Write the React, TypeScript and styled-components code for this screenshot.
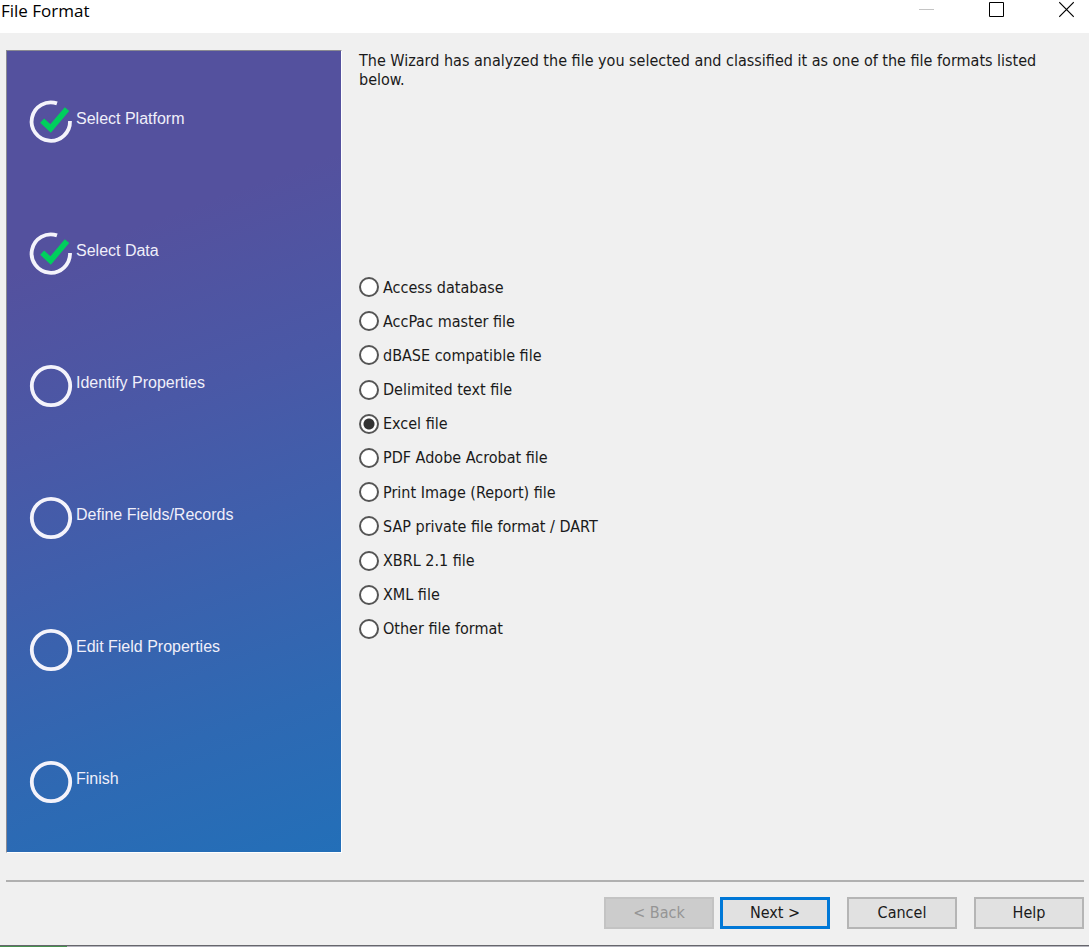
import React, { useState } from "react";
import styled, { createGlobalStyle } from "styled-components";

const GlobalStyle = createGlobalStyle`
  *, *::before, *::after { box-sizing: border-box; }
  body {
    margin: 0;
    background: #f0f0f0;
    color: #1a1a1a;
    font-family: Tahoma, "DejaVu Sans Condensed", "Open Sans", sans-serif;
    font-size: 16px;
  }
`;

const Window = styled.div`
  display: flex;
  flex-direction: column;
  min-height: 100vh;
`;

const TitleBar = styled.header`
  display: flex;
  justify-content: space-between;
  height: 33px;
  padding-left: 1px;
  background: #fff;
`;

const Title = styled.h1`
  margin: 0;
  color: #000;
  font-family: "Open Sans", "Noto Sans", sans-serif;
  font-size: 17px;
  font-weight: 400;
  line-height: 22px;
`;

const WindowControls = styled.div`
  display: flex;
  gap: 24px;
`;

const WindowButton = styled.button`
  display: flex;
  justify-content: center;
  width: 46px;
  height: 24px;
  padding: 1px 0 0 1px;
  border: 0;
  background: none;
  color: #000;

  &:disabled { color: #c4c4c4; }
`;

const Main = styled.main`
  display: flex;
  flex: 1;
  gap: 17px;
  padding: 17px 6px 27px;
`;

const Sidebar = styled.nav`
  flex: 0 0 336px;
  border: 1px solid;
  border-color: #8a8a92 #fff #fff #8a8a92;
  background: linear-gradient(160deg, #54519e 0%, #54519e 24%, #4a58a6 44%, #3f5fac 60%, #2e69b3 82%, #236fb8 100%);
`;

const Steps = styled.ol`
  margin: 0;
  padding: 47px 0 0 21px;
  list-style: none;
`;

const Step = styled.li`
  display: flex;
  gap: 2px;
  height: 132px;
  color: #f0effa;
  font-family: "Liberation Sans", Arial, sans-serif;
  font-size: 16px;
  line-height: 20px;

  &:last-child { height: 48px; }
`;

const StepLabel = styled.span`
  padding-top: 11px;
`;

const Content = styled.section`
  flex: 1;
  min-width: 0;
`;

const Intro = styled.p`
  max-width: 700px;
  height: 220px;
  margin: 0;
  padding-top: 1px;
  line-height: 19px;
`;

const Formats = styled.div`
  display: flex;
  flex-direction: column;
  justify-content: space-between;
  min-height: 376px;
`;

const Option = styled.label`
  display: flex;
  align-items: center;
  align-self: flex-start;
  gap: 4px;
  height: 34px;
`;

const Radio = styled.input`
  appearance: none;
  width: 20px;
  height: 20px;
  margin: 0;
  border: 2px solid #555;
  border-radius: 50%;
  background: #fff;

  &:checked {
    background: radial-gradient(circle, #333 5px, #fff 6px);
  }
`;

const Footer = styled.footer`
  display: flex;
  justify-content: flex-end;
  gap: 17px;
  margin: 0 5px 0 6px;
  padding: 15px 0 16px;
  border-top: 2px solid #b0b0b0;
`;

const StepButtons = styled.div`
  display: flex;
  gap: 6px;
`;

const Button = styled.button<{ $primary?: boolean }>`
  width: 110px;
  height: 32px;
  padding: 0;
  border: ${(p) => (p.$primary ? "3px solid #0078d7" : "2px solid #b5b5b5")};
  background: #e1e1e1;
  color: #1a1a1a;
  font: inherit;
  line-height: 20px;

  &:disabled {
    border-color: #c3c3c3;
    background: #ccc;
    color: #959595;
  }
`;

const TaskStrip = styled.div`
  height: 2px;
  border-top: 1px solid #66666c;
  background: linear-gradient(to right, #47914f 67px, #b4b4bc 67px);
`;

const steps = [
  { label: "Select Platform", done: true },
  { label: "Select Data", done: true },
  { label: "Identify Properties", done: false },
  { label: "Define Fields/Records", done: false },
  { label: "Edit Field Properties", done: false },
  { label: "Finish", done: false },
];

const formats = [
  "Access database",
  "AccPac master file",
  "dBASE compatible file",
  "Delimited text file",
  "Excel file",
  "PDF Adobe Acrobat file",
  "Print Image (Report) file",
  "SAP private file format / DART",
  "XBRL 2.1 file",
  "XML file",
  "Other file format",
];

function StepIcon({ done }: { done: boolean }) {
  return (
    <svg width="46" height="48" viewBox="0 0 46 48" fill="none" aria-hidden="true">
      {done ? (
        <>
          <path d="M29 5.4A19.2 19.2 0 1 0 42 23" stroke="#f4f3fb" strokeWidth="3.8" />
          <path d="M14.2 22.7L22.6 30.5L39 11.2" stroke="#00cf5d" strokeWidth="5.8" />
        </>
      ) : (
        <circle cx="23" cy="24" r="19.2" stroke="#f4f3fb" strokeWidth="3.8" />
      )}
    </svg>
  );
}

export default function App() {
  const [format, setFormat] = useState("Excel file");

  return (
    <>
      <GlobalStyle />
      <Window>
        <TitleBar>
          <Title>File Format</Title>
          <WindowControls>
            <WindowButton aria-label="Minimize" disabled>
              <svg width="15" height="17" viewBox="0 0 15 17" stroke="currentColor">
                <path d="M0 8.5H15" />
              </svg>
            </WindowButton>
            <WindowButton aria-label="Maximize">
              <svg width="15" height="17" viewBox="0 0 15 17" fill="none" stroke="currentColor">
                <path d="M.5 1.5H14.5V15.5H.5Z" />
              </svg>
            </WindowButton>
            <WindowButton aria-label="Close">
              <svg width="15" height="17" viewBox="0 0 15 17" stroke="currentColor">
                <path d="M.2 1.2L14.8 15.8M14.8 1.2L.2 15.8" strokeWidth="1.2" />
              </svg>
            </WindowButton>
          </WindowControls>
        </TitleBar>
        <Main>
          <Sidebar aria-label="Wizard steps">
            <Steps>
              {steps.map((step) => (
                <Step key={step.label}>
                  <StepIcon done={step.done} />
                  <StepLabel>{step.label}</StepLabel>
                </Step>
              ))}
            </Steps>
          </Sidebar>
          <Content>
            <Intro>
              The Wizard has analyzed the file you selected and classified it as one of the file formats listed below.
            </Intro>
            <Formats role="radiogroup" aria-label="File format">
              {formats.map((name) => (
                <Option key={name}>
                  <Radio
                    type="radio"
                    name="format"
                    value={name}
                    checked={format === name}
                    onChange={() => setFormat(name)}
                  />
                  {name}
                </Option>
              ))}
            </Formats>
          </Content>
        </Main>
        <Footer>
          <StepButtons>
            <Button disabled>&lt; Back</Button>
            <Button $primary>Next &gt;</Button>
          </StepButtons>
          <Button>Cancel</Button>
          <Button>Help</Button>
        </Footer>
        <TaskStrip />
      </Window>
    </>
  );
}
